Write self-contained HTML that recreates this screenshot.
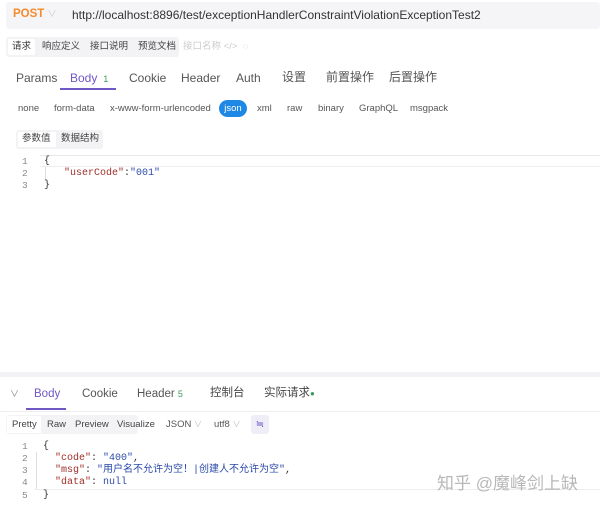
<!DOCTYPE html>
<html><head><meta charset="utf-8"><style>
*{margin:0;padding:0;box-sizing:border-box}
body{width:600px;height:508px;background:#fff;font-family:"Liberation Sans","Noto Sans CJK SC",sans-serif;position:relative;overflow:hidden;color:#333}
.a{position:absolute;white-space:nowrap;line-height:1.2}
.mono{font-family:"Liberation Mono","Noto Sans CJK SC",monospace;font-size:10px;line-height:12px;height:12px}
.ln{color:#888;font-size:9.5px}
.k{color:#a0302a}.s{color:#2a4aa8}
</style></head><body>
<div class="a" style="left:6px;top:2px;width:594px;height:27px;background:#f5f5f7;border-radius:3px"></div>
<div class="a" style="left:13px;top:8px;font-size:11.5px;font-weight:bold;color:#f58a2c">POST <span style="color:#ccc;font-weight:normal;font-size:9px">∨</span></div>
<div class="a" style="left:72px;top:8px;font-size:12px;color:#333">http://localhost:8896/test/exceptionHandlerConstraintViolationExceptionTest2</div>

<div class="a" style="left:6px;top:37px;width:173px;height:20px;background:#f3f3f5;border-radius:3px"></div>
<div class="a" style="left:8px;top:39px;width:27px;height:16px;background:#fff;border-radius:2px"></div>
<div class="a" style="left:12px;top:41px;font-size:9.5px;color:#333">请求</div>
<div class="a" style="left:42px;top:41px;font-size:9.5px;color:#444">响应定义</div>
<div class="a" style="left:90px;top:41px;font-size:9.5px;color:#444">接口说明</div>
<div class="a" style="left:138px;top:41px;font-size:9.5px;color:#444">预览文档</div>
<div class="a" style="left:183px;top:41px;font-size:9.5px;color:#ccc">接口名称 &lt;/&gt; &nbsp;◌</div>

<div class="a" style="left:16px;top:71px;font-size:12px;color:#555">Params</div>
<div class="a" style="left:70px;top:71px;font-size:12px;color:#7057c4">Body <span style="font-size:9px;color:#3a9a5a">&nbsp;1</span></div>
<div class="a" style="left:60px;top:88px;width:56px;height:2px;background:#7057c4"></div>
<div class="a" style="left:129px;top:71px;font-size:12px;color:#555">Cookie</div>
<div class="a" style="left:181px;top:71px;font-size:12px;color:#555">Header</div>
<div class="a" style="left:236px;top:71px;font-size:12px;color:#555">Auth</div>
<div class="a" style="left:282px;top:70px;font-size:12px;color:#555">设置</div>
<div class="a" style="left:326px;top:70px;font-size:12px;color:#555">前置操作</div>
<div class="a" style="left:389px;top:70px;font-size:12px;color:#555">后置操作</div>

<div class="a" style="left:18px;top:103px;font-size:9.5px;color:#555">none</div>
<div class="a" style="left:54px;top:103px;font-size:9.5px;color:#555">form-data</div>
<div class="a" style="left:110px;top:103px;font-size:9.5px;color:#555">x-www-form-urlencoded</div>
<div class="a" style="left:219px;top:100px;width:28px;height:17px;background:#1e88e5;border-radius:9px;color:#fff;font-size:9.5px;text-align:center;line-height:17px">json</div>
<div class="a" style="left:257px;top:103px;font-size:9.5px;color:#555">xml</div>
<div class="a" style="left:287px;top:103px;font-size:9.5px;color:#555">raw</div>
<div class="a" style="left:318px;top:103px;font-size:9.5px;color:#555">binary</div>
<div class="a" style="left:359px;top:103px;font-size:9.5px;color:#555">GraphQL</div>
<div class="a" style="left:410px;top:103px;font-size:9.5px;color:#555">msgpack</div>

<div class="a" style="left:16px;top:130px;width:87px;height:19px;background:#f3f3f5;border-radius:3px"></div>
<div class="a" style="left:18px;top:132px;width:38px;height:15px;background:#fff"></div>
<div class="a" style="left:22px;top:133px;font-size:9.5px;color:#444">参数值</div>
<div class="a" style="left:61px;top:133px;font-size:9.5px;color:#444">数据结构</div>

<div class="a" style="left:40px;top:155px;width:560px;height:1px;background:#e8e8e8"></div>
<div class="a" style="left:40px;top:166px;width:560px;height:1px;background:#eee"></div>
<div class="a" style="left:45px;top:167px;width:1px;height:12px;background:#ddd"></div>
<div class="a mono ln" style="left:22px;top:156px">1</div>
<div class="a mono ln" style="left:22px;top:168px">2</div>
<div class="a mono ln" style="left:22px;top:180px">3</div>
<div class="a mono" style="left:44px;top:156px">{</div>
<div class="a mono k" style="left:64px;top:168px">"userCode"<span style="color:#333">:</span><span class="s">"001"</span></div>
<div class="a mono" style="left:44px;top:180px">}</div>

<div class="a" style="left:0;top:372px;width:600px;height:5px;background:#f2f2f4"></div>

<div class="a" style="left:10px;top:389px;font-size:9px;color:#888">∨</div>
<div class="a" style="left:34px;top:388px;font-size:11.5px;color:#7057c4">Body</div>
<div class="a" style="left:26px;top:408px;width:40px;height:2px;background:#7057c4"></div>
<div class="a" style="left:82px;top:388px;font-size:11.5px;color:#555">Cookie</div>
<div class="a" style="left:137px;top:388px;font-size:11.5px;color:#555">Header <span style="font-size:9px;color:#3a9a5a">5</span></div>
<div class="a" style="left:210px;top:387px;font-size:11.5px;color:#444">控制台</div>
<div class="a" style="left:264px;top:387px;font-size:11.5px;color:#444">实际请求<span style="color:#3a9a5a;font-size:8px">●</span></div>
<div class="a" style="left:0;top:411px;width:600px;height:1px;background:#eee"></div>

<div class="a" style="left:6px;top:415px;width:132px;height:19px;background:#f3f3f5;border-radius:3px"></div>
<div class="a" style="left:7px;top:416px;width:34px;height:17px;background:#fff"></div>
<div class="a" style="left:12px;top:419px;font-size:9.5px;color:#444">Pretty</div>
<div class="a" style="left:47px;top:419px;font-size:9.5px;color:#444">Raw</div>
<div class="a" style="left:75px;top:419px;font-size:9.5px;color:#444">Preview</div>
<div class="a" style="left:117px;top:419px;font-size:9.5px;color:#444">Visualize</div>
<div class="a" style="left:166px;top:419px;font-size:9.5px;color:#555">JSON <span style="color:#bbb;font-size:8px">∨</span></div>
<div class="a" style="left:214px;top:419px;font-size:9.5px;color:#555">utf8 <span style="color:#bbb;font-size:8px">∨</span></div>
<div class="a" style="left:251px;top:415px;width:18px;height:19px;background:#efeef8;border-radius:3px;color:#7057c4;font-size:10px;text-align:center;line-height:19px">≒</div>

<div class="a" style="left:36px;top:452px;width:1px;height:37px;background:#ddd"></div>
<div class="a" style="left:34px;top:489px;width:566px;height:1px;background:#eee"></div>
<div class="a mono ln" style="left:22px;top:441px">1</div>
<div class="a mono ln" style="left:22px;top:453px">2</div>
<div class="a mono ln" style="left:22px;top:465px">3</div>
<div class="a mono ln" style="left:22px;top:477px">4</div>
<div class="a mono ln" style="left:22px;top:490px">5</div>
<div class="a mono" style="left:43px;top:441px">{</div>
<div class="a mono k" style="left:55px;top:453px">"code"<span style="color:#333">: </span><span class="s">"400"</span><span style="color:#333">,</span></div>
<div class="a mono k" style="left:55px;top:465px">"msg"<span style="color:#333">: </span><span class="s">"用户名不允许为空！|创建人不允许为空"</span><span style="color:#333">,</span></div>
<div class="a mono k" style="left:55px;top:477px">"data"<span style="color:#333">: </span><span class="s">null</span></div>
<div class="a mono" style="left:43px;top:490px">}</div>

<div class="a" style="left:437px;top:474px;font-size:17px;color:rgba(160,160,160,0.75)">知乎 @魔峰剑上缺</div>
</body></html>
